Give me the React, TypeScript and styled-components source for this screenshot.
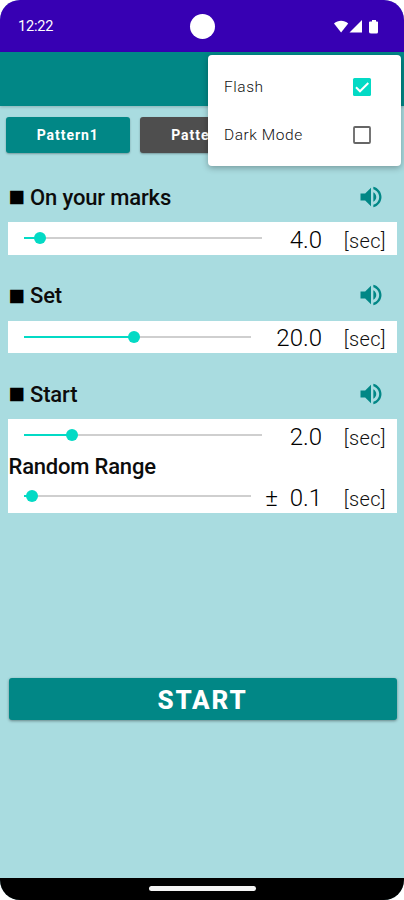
import React from "react";
import styled, { createGlobalStyle } from "styled-components";

const TEAL = "#018786";
const ACCENT = "#03dac5";

const GlobalStyle = createGlobalStyle`
  html, body { margin: 0; background: #fff; }
  * { box-sizing: border-box; }
`;

const Screen = styled.div`
  position: relative;
  width: 404px;
  height: 900px;
  overflow: hidden;
  display: flex;
  flex-direction: column;
  border-radius: 20px;
  background: #a9dce0;
  font-family: Roboto, "Liberation Sans", sans-serif;
  color: #0c0c0c;
`;

const StatusBar = styled.header`
  flex: none;
  height: 51.5px;
  padding: 2px 25px 0 18px;
  display: grid;
  grid-template-columns: 1fr 25px 1fr;
  align-items: center;
  background: #3700b3;
`;

const Clock = styled.span`
  color: #fff;
  font-size: 14.5px;
  font-weight: 400;
  letter-spacing: -0.2px;
`;

const Camera = styled.span`
  width: 25px;
  height: 25px;
  margin-left: 3.5px;
  border-radius: 50%;
  background: #fff;
`;

const StatusIcons = styled.svg`
  justify-self: end;
  width: 46px;
  height: 16px;
  display: block;
`;

const AppBar = styled.div`
  flex: none;
  height: 54.5px;
  background: ${TEAL};
  box-shadow: 0 1px 3px rgba(0, 0, 0, 0.2);
`;

const Tabs = styled.nav`
  flex: none;
  display: flex;
  gap: 10px;
  padding: 11px 5.5px 0;
  height: 67px;
`;

const Tab = styled.button<{ $active?: boolean }>`
  flex: none;
  width: 124.5px;
  height: 36px;
  padding: 0;
  border: 0;
  border-radius: 3px;
  background: ${(p) => (p.$active ? TEAL : "#4e4e4e")};
  box-shadow: 0 1px 2px rgba(0, 0, 0, 0.3);
  color: #fff;
  font: 700 14px Roboto, sans-serif;
  letter-spacing: 0.95px;
`;

const Section = styled.section`
  flex: none;
  padding: 0 7px 0 8px;
  margin-bottom: 17px;
`;

const SectionHead = styled.div`
  height: 49px;
  display: flex;
  align-items: center;
  padding: 0 12px 0 1px;
`;

const Bullet = styled.span`
  width: 21px;
  margin: -3px 0 0 -0.5px;
  font: 17.5px/20px "DejaVu Sans", sans-serif;
  color: #000;
`;

const Title = styled.h2`
  flex: 1;
  margin: 0 0 0 0.5px;
  font-size: 22px;
  line-height: 24px;
  font-weight: 500;
  letter-spacing: -0.15px;
`;

const SpeakerIcon = styled.svg`
  width: 28px;
  height: 28px;
  margin-top: -2px;
  display: block;
  fill: ${TEAL};
`;

const Panel = styled.div`
  background: #fff;
`;

const Row = styled.div`
  height: 32.5px;
  display: flex;
  align-items: center;
  padding: 0 11px 0 16px;
`;

const Track = styled.div<{ $length: number; $fill: number }>`
  flex: none;
  width: ${(p) => p.$length}px;
  height: 12px;
  display: flex;
  align-items: center;
  background: linear-gradient(
      to right,
      ${ACCENT} ${(p) => p.$fill}px,
      #cfcfcf ${(p) => p.$fill}px
    )
    center / 100% 2px no-repeat;
`;

const Thumb = styled.span<{ $at: number }>`
  width: 12px;
  height: 12px;
  margin-left: ${(p) => p.$at - 6}px;
  border-radius: 50%;
  background: ${ACCENT};
`;

const Value = styled.span`
  flex: 1;
  padding-top: 3px;
  text-align: right;
  white-space: pre;
  font-size: 24px;
  line-height: 28px;
  font-weight: 300;
  color: #000;
`;

const Unit = styled.span`
  width: 64px;
  padding-top: 5px;
  text-align: right;
  font-size: 20px;
  line-height: 24px;
  font-weight: 300;
  letter-spacing: 0.35px;
  color: #111;
`;

const SubTitle = styled.h3`
  margin: 0;
  padding: 2px 0 0 0.5px;
  height: 28.5px;
  font-size: 22px;
  line-height: 26px;
  font-weight: 500;
  letter-spacing: -0.2px;
`;

const StartButton = styled.button`
  flex: none;
  height: 42px;
  margin: 148px 7.5px 0 8.5px;
  padding: 2px 0 0;
  border: 0;
  border-radius: 3px;
  background: ${TEAL};
  box-shadow: 0 1px 3px rgba(0, 0, 0, 0.4);
  color: #fff;
  font: 800 26px Roboto, sans-serif;
  letter-spacing: 1.8px;
`;

const NavBar = styled.footer`
  flex: none;
  height: 22.5px;
  margin-top: auto;
  display: flex;
  justify-content: center;
  align-items: center;
  background: #000;
`;

const HomeHandle = styled.span`
  width: 107px;
  height: 5px;
  border-radius: 3px;
  background: #f4f4f4;
`;

const Menu = styled.div`
  position: absolute;
  top: 55px;
  left: 208px;
  width: 193px;
  height: 111px;
  padding: 8.5px 29px 8px 16px;
  border-radius: 4px;
  background: #fff;
  box-shadow: 0 2px 6px rgba(0, 0, 0, 0.3);
`;

const MenuItem = styled.div`
  height: 47.5px;
  display: flex;
  align-items: center;
  justify-content: space-between;
  font-size: 15.5px;
  font-weight: 300;
  letter-spacing: 0.55px;
  color: #111;
`;

const Checkbox = styled.svg`
  width: 20px;
  height: 20px;
  margin-right: 0.5px;
  display: block;
`;

const Speaker = () => (
  <SpeakerIcon viewBox="0 0 24 24">
    <path d="M3 9v6h4l5 5V4L7 9H3zm13.5 3c0-1.77-1.02-3.29-2.5-4.03v8.05c1.48-.73 2.5-2.25 2.5-4.02zM14 3.23v2.06c2.89.86 5 3.54 5 6.71s-2.11 5.85-5 6.71v2.06c4.01-.91 7-4.49 7-8.77s-2.99-7.86-7-8.77z" />
  </SpeakerIcon>
);

const Heading = ({ children }: { children: string }) => (
  <SectionHead>
    <Bullet>■</Bullet>
    <Title>{children}</Title>
    <Speaker />
  </SectionHead>
);

type SliderProps = { length: number; at: number; value: string };

const SliderRow = ({ length, at, value }: SliderProps) => (
  <Row>
    <Track $length={length} $fill={at}>
      <Thumb $at={at} />
    </Track>
    <Value>{value}</Value>
    <Unit>[sec]</Unit>
  </Row>
);

export default function App() {
  return (
    <>
      <GlobalStyle />
      <Screen>
        <StatusBar>
          <Clock>12:22</Clock>
          <Camera />
          <StatusIcons viewBox="0 0 46 16" fill="#fff">
            <path d="M1 4.4C5 .7 11.200 .7 15.200 4.400L8.100 13.400z" />
            <path d="M29 1v12.500H16.500z" />
            <path d="M37 2.500h2V1h4v1.500h1.200q.8 0 .8 .8V13q0 1.500-1.500 1.500h-5Q36 14.500 36 13V3.500q0-1 1-1z" />
          </StatusIcons>
        </StatusBar>
        <AppBar />
        <Tabs>
          <Tab $active>Pattern1</Tab>
          <Tab>Pattern2</Tab>
          <Tab>Pattern3</Tab>
        </Tabs>
        <Section>
          <Heading>On your marks</Heading>
          <Panel>
            <SliderRow length={238} at={16} value="4.0" />
          </Panel>
        </Section>
        <Section>
          <Heading>Set</Heading>
          <Panel>
            <SliderRow length={227} at={110} value="20.0" />
          </Panel>
        </Section>
        <Section>
          <Heading>Start</Heading>
          <Panel>
            <SliderRow length={238} at={48} value="2.0" />
            <SubTitle>Random Range</SubTitle>
            <SliderRow length={227} at={8} value="±  0.1" />
          </Panel>
        </Section>
        <StartButton>START</StartButton>
        <NavBar>
          <HomeHandle />
        </NavBar>
        <Menu>
          <MenuItem>
            Flash
            <Checkbox viewBox="0 0 20 20">
              <rect x="1" y="1" width="18" height="18" rx="1.500" fill={ACCENT} />
              <path d="M4 10.300l4 4L16.300 6" fill="none" stroke="#fff" strokeWidth="2" />
            </Checkbox>
          </MenuItem>
          <MenuItem>
            Dark Mode
            <Checkbox viewBox="0 0 20 20">
              <rect x="2" y="2" width="16" height="16" rx="1" fill="none" stroke="#666" strokeWidth="1.800" />
            </Checkbox>
          </MenuItem>
        </Menu>
      </Screen>
    </>
  );
}
